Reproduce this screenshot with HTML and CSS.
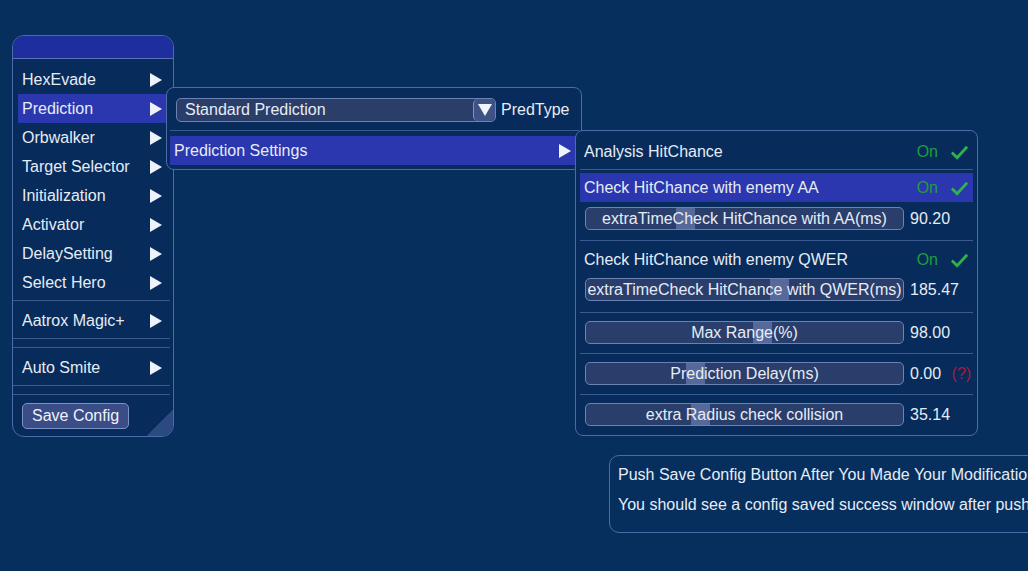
FILE: index.html
```html
<!DOCTYPE html>
<html lang="en">
<head>
    <meta charset="UTF-8">
    <meta name="viewport" content="width=device-width, initial-scale=1.0">
    <title>Menu</title>
    <link rel="stylesheet" href="styles.css">
</head>
<body>
    <!-- Main menu -->
    <div class="menu">
        <div class="menu-head"></div>
        <div class="menu-body">
            <div class="item"><span>HexEvade</span><span class="arrow"></span></div>
            <div class="item active"><span>Prediction</span><span class="arrow"></span></div>
            <div class="item"><span>Orbwalker</span><span class="arrow"></span></div>
            <div class="item"><span>Target Selector</span><span class="arrow"></span></div>
            <div class="item"><span>Initialization</span><span class="arrow"></span></div>
            <div class="item"><span>Activator</span><span class="arrow"></span></div>
            <div class="item"><span>DelaySetting</span><span class="arrow"></span></div>
            <div class="item"><span>Select Hero</span><span class="arrow"></span></div>
            <div class="sep"></div>
            <div class="item"><span>Aatrox Magic+</span><span class="arrow"></span></div>
            <div class="sep"></div>
            <div class="sep"></div>
            <div class="item"><span>Auto Smite</span><span class="arrow"></span></div>
            <div class="sep"></div>
            <div class="sep"></div>
            <button class="save">Save Config</button>
        </div>
        <div class="grip"></div>
    </div>

    <!-- Prediction submenu -->
    <div class="sub">
        <div class="combo-row">
            <div class="combo">
                <span>Standard Prediction</span>
                <span class="combo-btn"><span class="down"></span></span>
            </div>
            <span class="combo-label">PredType</span>
        </div>
        <div class="sub-sep"></div>
        <div class="item wide active"><span>Prediction Settings</span><span class="arrow"></span></div>
    </div>

    <!-- Prediction settings -->
    <div class="settings">
        <div class="group g-top">
            <div class="toggle">
                <span>Analysis HitChance</span>
                <span class="state">On <svg class="check" viewBox="0 0 20 16"><path d="M2 8.5 L7.5 14 L18 2.5"/></svg></span>
            </div>
        </div>
        <div class="group g-aa">
            <div class="toggle active">
                <span>Check HitChance with enemy AA</span>
                <span class="state">On <svg class="check" viewBox="0 0 20 16"><path d="M2 8.5 L7.5 14 L18 2.5"/></svg></span>
            </div>
            <div class="slider-row">
                <div class="slider"><span class="thumb" style="left: 90px"></span><span class="label">extraTimeCheck HitChance with AA(ms)</span></div>
                <span class="value">90.20</span>
            </div>
        </div>
        <div class="group g-qwer">
            <div class="toggle">
                <span>Check HitChance with enemy QWER</span>
                <span class="state">On <svg class="check" viewBox="0 0 20 16"><path d="M2 8.5 L7.5 14 L18 2.5"/></svg></span>
            </div>
            <div class="slider-row">
                <div class="slider"><span class="thumb" style="left: 184px"></span><span class="label">extraTimeCheck HitChance with QWER(ms)</span></div>
                <span class="value">185.47</span>
            </div>
        </div>
        <div class="group">
            <div class="slider-row">
                <div class="slider"><span class="thumb" style="left: 167px"></span><span class="label">Max Range(%)</span></div>
                <span class="value">98.00</span>
            </div>
        </div>
        <div class="group">
            <div class="slider-row">
                <div class="slider"><span class="thumb" style="left: 100px"></span><span class="label">Prediction Delay(ms)</span></div>
                <span class="value">0.00 <span class="help">(?)</span></span>
            </div>
        </div>
        <div class="group last">
            <div class="slider-row">
                <div class="slider"><span class="thumb" style="left: 105px"></span><span class="label">extra Radius check collision</span></div>
                <span class="value">35.14</span>
            </div>
        </div>
    </div>

    <!-- Hint box -->
    <div class="hint">
        <p>Push Save Config Button After You Made Your Modifications</p>
        <p>You should see a config saved success window after pushing it</p>
    </div>
</body>
</html>
```

FILE: styles.css
```css
body {
    margin: 0;
    width: 1028px;
    height: 571px;
    overflow: hidden;
    position: relative;
    background-color: #062f5e;
    color: #e6ecf6;
    font-family: 'Liberation Sans', Arial, sans-serif;
    font-size: 16px;
}

/* Main menu */
.menu {
    position: absolute;
    left: 12px;
    top: 35px;
    width: 160px;
    height: 400px;
    border: 1px solid #4b6ca8;
    border-radius: 12px;
    background-color: #072b5a;
    overflow: hidden;
}

.menu-head {
    height: 22px;
    background-color: #1f2e9e;
    border-bottom: 1px solid #5874b4;
}

.menu-body {
    padding-top: 6px;
    display: flex;
    flex-direction: column;
}

.item {
    height: 29px;
    margin: 0 6px 0 5px;
    padding: 0 5px 0 4px;
    display: flex;
    align-items: center;
    justify-content: space-between;
}

.item.active {
    background-color: #2b37ae;
}

.arrow {
    width: 0;
    height: 0;
    border-top: 7px solid transparent;
    border-bottom: 7px solid transparent;
    border-left: 12px solid #eef2fa;
}

.sep {
    height: 1px;
    margin: 3px 3px 5px 0;
    background-color: #3a5a92;
}

.save {
    align-self: flex-start;
    margin: 3px 0 0 9px;
    height: 26px;
    padding: 0 9px;
    font-family: 'Liberation Sans', Arial, sans-serif;
    font-size: 16px;
    color: #eef2fa;
    background-color: #3a4d86;
    border: 1px solid #7d93c6;
    border-radius: 5px;
}

.grip {
    position: absolute;
    right: 0;
    bottom: 0;
    width: 26px;
    height: 26px;
    background: linear-gradient(135deg, transparent 50%, #2c4a82 50%);
}

/* Prediction submenu */
.sub {
    position: absolute;
    left: 166px;
    top: 87px;
    width: 414px;
    height: 81px;
    border: 1px solid #4b6ca8;
    border-radius: 8px;
    background-color: #072b5a;
}

.combo-row {
    display: flex;
    align-items: center;
    padding: 10px 0 0 9px;
}

.combo {
    display: flex;
    align-items: center;
    justify-content: space-between;
    padding-left: 8px;
    box-sizing: border-box;
    width: 320px;
    height: 24px;
    background-color: #2b3e6a;
    border: 1px solid #6c82b2;
    border-radius: 5px;
}

.combo-btn {
    width: 21px;
    height: 22px;
    display: flex;
    align-items: center;
    justify-content: center;
    background-color: #3f5286;
    border-left: 1px solid #7d93c6;
    border-radius: 5px;
}

.down {
    width: 0;
    height: 0;
    border-left: 7px solid transparent;
    border-right: 7px solid transparent;
    border-top: 12px solid #f0f4fb;
}

.combo-label {
    margin-left: 5px;
}

.sub-sep {
    height: 1px;
    margin: 8px 2px 5px 3px;
    background-color: #3a5a92;
}

.item.wide {
    margin: 0 0 0 3px;
    padding-right: 10px;
    height: 29px;
}

/* Prediction settings */
.settings {
    position: absolute;
    left: 575px;
    top: 130px;
    width: 401px;
    border: 1px solid #4b6ca8;
    border-radius: 8px;
    background-color: #072b5a;
    padding-top: 6px;
}

.group {
    border-bottom: 1px solid #3a5a92;
    margin: 0 4px;
    padding: 8px 0 9px;
}

.group.g-top {
    padding: 0 0 3px;
}

.group.g-aa {
    padding: 3px 0 10px;
}

.group.g-qwer {
    padding: 4px 0 11px;
}

.group.last {
    border-bottom: none;
}

.toggle {
    height: 29px;
    padding: 0 4px;
    display: flex;
    align-items: center;
    justify-content: space-between;
}

.toggle.active {
    background-color: #2b37ae;
}

.state {
    display: flex;
    align-items: center;
    gap: 12px;
    color: #1f9e3c;
}

.check {
    width: 19px;
    height: 16px;
    fill: none;
    stroke: #2fb24a;
    stroke-width: 3;
}

.slider-row {
    display: flex;
    align-items: center;
    margin-left: 5px;
}

.g-aa .slider-row {
    margin-top: 5px;
}

.g-qwer .slider-row {
    margin-top: 4px;
}

.slider {
    position: relative;
    width: 319px;
    height: 23px;
    box-sizing: border-box;
    background-color: #2a3e6c;
    border: 1px solid #6c82b2;
    border-radius: 5px;
    display: flex;
    align-items: center;
    justify-content: center;
    overflow: hidden;
}

.thumb {
    position: absolute;
    top: 0;
    width: 19px;
    height: 100%;
    background-color: #56699a;
}

.label {
    position: relative;
    white-space: nowrap;
}

.value {
    margin-left: 6px;
}

.help {
    margin-left: 6px;
    color: #b0163e;
}

/* Hint box */
.hint {
    position: absolute;
    left: 609px;
    top: 455px;
    width: 560px;
    height: 78px;
    border: 1px solid #4b6ca8;
    border-radius: 10px;
    padding: 10px 0 0 8px;
    box-sizing: border-box;
}

.hint p {
    margin: 0 0 12px;
    white-space: nowrap;
    line-height: 18px;
}
```
